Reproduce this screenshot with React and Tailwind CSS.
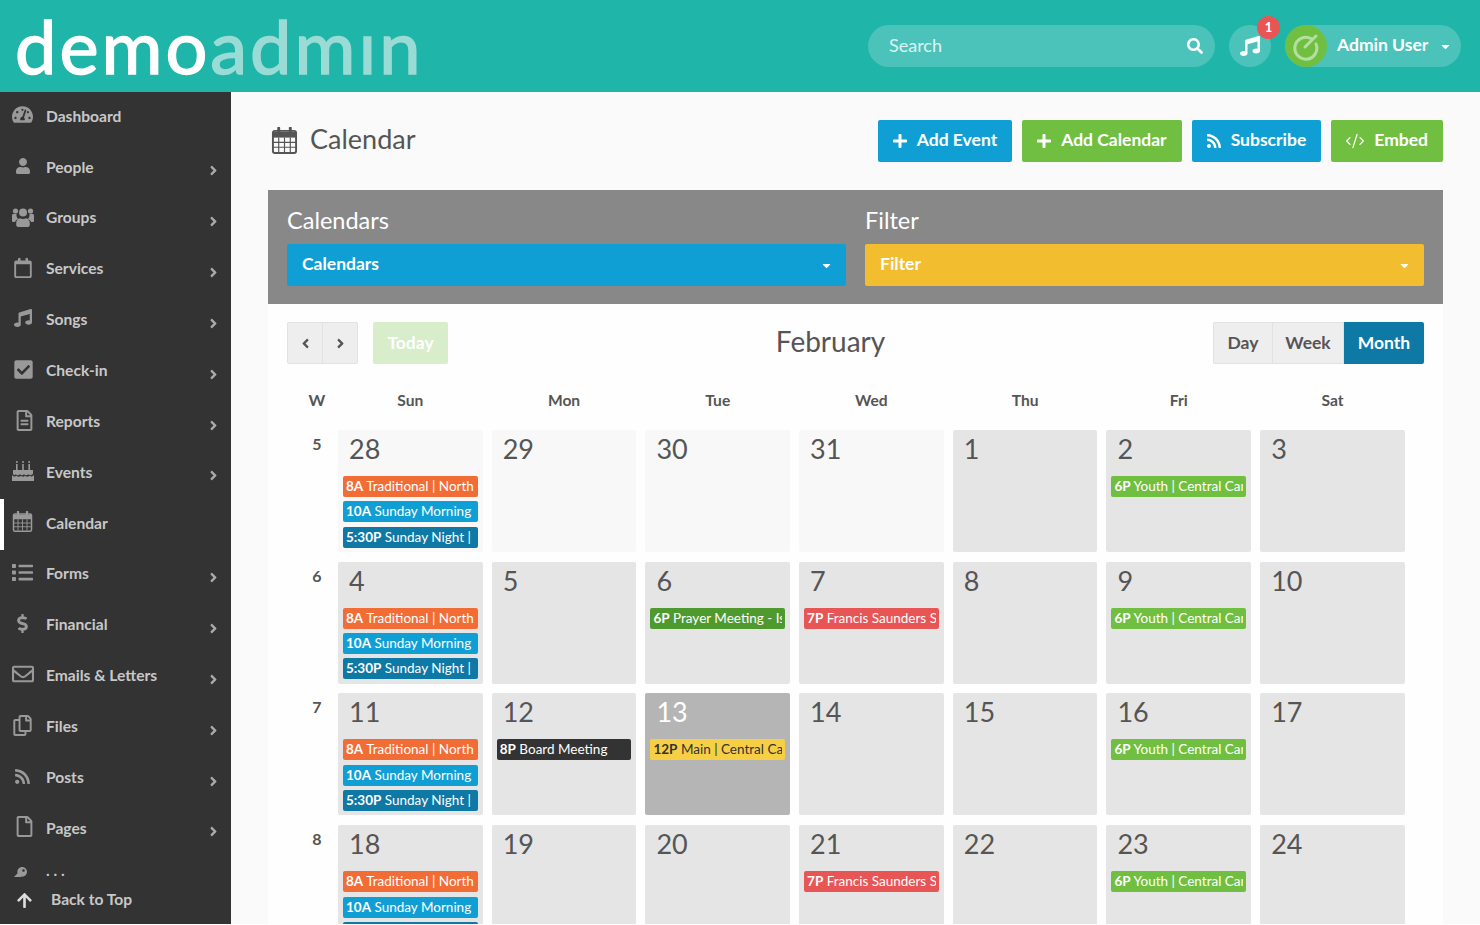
import { FaTachometerAlt, FaUser, FaRegCalendar, FaMusic, FaCheckSquare, FaRegFileAlt, FaList, FaDollarSign, FaRegEnvelope, FaRegCopy, FaRss, FaRegFile, FaAngleRight, FaAngleLeft, FaArrowUp, FaSearch, FaPlus, FaCaretDown, FaKey } from 'react-icons/fa'
import { CodeXml } from 'lucide-react'

function CalendarIcon({ size = 24, className }) {
  return (
    <svg width={size} height={size} viewBox="0 0 26 28" className={className} fill="none" stroke="currentColor">
      <rect x="1" y="4" width="24" height="23" rx="2" strokeWidth="2" />
      <path d="M1 5h24v6H1z" fill="currentColor" strokeWidth="0" />
      <path d="M1 16h24M1 21h24M7 11v15M13 11v15M19 11v15" strokeWidth="1.2" />
      <path d="M7 1v6M19 1v6" strokeWidth="3" strokeLinecap="round" />
    </svg>
  )
}

function CakeIcon({ size = 22 }) {
  return (
    <svg width={size} height={size} viewBox="0 0 22 22" fill="currentColor">
      <path d="M0 15c2 2 3 2 4.5.8 1.5 1.2 3 1.2 4.5 0 1.5 1.2 2.500 1.200 4 0 1.500 1.200 3 1.200 4.500 0 1.500 1.200 2.500 1.200 4.500-.8V21H0z" />
      <path d="M1 10h20v4c-2 1.500-3 1.500-4.500.2-1.500 1.300-3 1.300-4.500 0-1.500 1.300-2.500 1.300-4 0-1.500 1.300-3 1.300-4.500 0C3 15.500 2 15.500 1 14z" />
      <path d="M4 4h1.600v6H4zM10.200 4h1.600v6h-1.600zM16.400 4H18v6h-1.600z" />
      <circle cx="4.800" cy="2" r="1" />
      <circle cx="11" cy="2" r="1" />
      <circle cx="17.200" cy="2" r="1" />
    </svg>
  )
}

function GroupIcon() {
  return (
    <svg width="22" height="22" viewBox="0 0 22 22" fill="currentColor">
      <circle cx="3.500" cy="5" r="2.600" />
      <circle cx="18.500" cy="5" r="2.600" />
      <circle cx="11" cy="6.500" r="4" />
      <path d="M0 9.500c0-1 .6-1.500 1.500-1.500h3c-.3 2.500.6 4 1.800 5-1.700.6-2.800 1.700-3.300 3H1.500C.5 16 0 15.500 0 14.500zM22 9.500c0-1-.6-1.500-1.500-1.500h-3c.3 2.500-.6 4-1.800 5 1.700.6 2.800 1.700 3.300 3h1.500c1 0 1.500-.5 1.500-1.500z" />
      <path d="M8 12.200c1.800 1 4.200 1 6 0 2.500.4 3.800 2.300 3.800 5V19c0 1.300-1 2-2 2H6.200c-1 0-2-.7-2-2v-1.800c0-2.700 1.300-4.600 3.800-5z" />
    </svg>
  )
}

const navItems = [
  { label: 'Dashboard', icon: <FaTachometerAlt size={21} /> },
  { label: 'People', icon: <FaUser size={16} className="ml-[3px]" />, more: true },
  { label: 'Groups', icon: <GroupIcon />, more: true },
  { label: 'Services', icon: <FaRegCalendar size={20} className="ml-px" />, more: true },
  { label: 'Songs', icon: <FaMusic size={18} className="ml-[2px]" />, more: true },
  { label: 'Check-in', icon: <FaCheckSquare size={21} className="ml-px" />, more: true },
  { label: 'Reports', icon: <FaRegFileAlt size={21} className="ml-[2px]" />, more: true },
  { label: 'Events', icon: <CakeIcon />, more: true },
  { label: 'Calendar', icon: <CalendarIcon size={21} />, active: true },
  { label: 'Forms', icon: <FaList size={21} />, more: true },
  { label: 'Financial', icon: <FaDollarSign size={19} className="ml-[1px]" />, more: true },
  { label: 'Emails & Letters', icon: <FaRegEnvelope size={22} />, more: true },
  { label: 'Files', icon: <FaRegCopy size={21} />, more: true },
  { label: 'Posts', icon: <FaRss size={17} className="ml-[2px]" />, more: true },
  { label: 'Pages', icon: <FaRegFile size={21} className="ml-[2px]" />, more: true },
  { label: '. . .', icon: <FaKey size={14} className="ml-px -mt-[8px]" />, clipped: true },
]

const kinds = {
  orange: 'bg-[#f26c36] text-white',
  blue: 'bg-[#109fd5] text-white',
  navy: 'bg-[#0f79a5] text-white',
  green: 'bg-[#70bf41] text-white',
  forest: 'bg-[#4f9a2f] text-white',
  red: 'bg-[#e85555] text-white',
  black: 'bg-[#333333] text-white',
  yellow: 'bg-[#f7cf45] text-[#333333]',
}

const sunday = [
  { time: '8A', title: 'Traditional | North', kind: 'orange' },
  { time: '10A', title: 'Sunday Morning', kind: 'blue' },
  { time: '5:30P', title: 'Sunday Night | North Campus', kind: 'navy' },
]
const youth = [{ time: '6P', title: 'Youth | Central Campus', kind: 'green' }]
const francis = [{ time: '7P', title: 'Francis Saunders Shower', kind: 'red' }]

const weeks = [
  { n: 5, days: [
    { d: 28, past: true, events: sunday }, { d: 29, past: true }, { d: 30, past: true }, { d: 31, past: true },
    { d: 1 }, { d: 2, events: youth }, { d: 3 },
  ] },
  { n: 6, days: [
    { d: 4, events: sunday }, { d: 5 }, { d: 6, events: [{ time: '6P', title: 'Prayer Meeting - Issues', kind: 'forest' }] },
    { d: 7, events: francis }, { d: 8 }, { d: 9, events: youth }, { d: 10 },
  ] },
  { n: 7, days: [
    { d: 11, events: sunday }, { d: 12, events: [{ time: '8P', title: 'Board Meeting', kind: 'black' }] },
    { d: 13, today: true, events: [{ time: '12P', title: 'Main | Central Campus', kind: 'yellow' }] },
    { d: 14 }, { d: 15 }, { d: 16, events: youth }, { d: 17 },
  ] },
  { n: 8, days: [
    { d: 18, events: sunday }, { d: 19 }, { d: 20 }, { d: 21, events: francis }, { d: 22 }, { d: 23, events: youth }, { d: 24 },
  ] },
]

function Button({ color, icon, children }) {
  return (
    <button className={`h-[42px] pl-[14px] pr-[15px] rounded-[2px] flex items-center gap-[9px] text-white font-bold text-[17.5px] ${color}`}>
      {icon}
      <span className="-mt-[2px]">{children}</span>
    </button>
  )
}

function Select({ color, children }) {
  return (
    <div className={`h-[42px] rounded-[2px] pl-[15px] pr-[13px] flex items-center justify-between text-white font-bold text-[17.5px] ${color}`}>
      <span className="-mt-[2px]">{children}</span>
      <FaCaretDown size={13} />
    </div>
  )
}

function Chip({ time, title, kind }) {
  return (
    <div className={`h-[21px] mb-[4.4px] rounded-[2px] px-[3px] text-[13.5px] leading-[20px] ${kinds[kind]}`}>
      <div className="overflow-hidden whitespace-nowrap">
        <b>{time}</b> {title}
      </div>
    </div>
  )
}

function Day({ d, past, today, events = [] }) {
  const bg = today ? 'bg-[#b5b5b5] text-white' : past ? 'bg-[#f8f8f8] text-[#555555]' : 'bg-[#e5e5e5] text-[#555555]'
  return (
    <div className={`h-[122px] rounded-[2px] px-[5px] ${bg}`}>
      <div className="h-[46px] pl-[6px] pt-[1px] text-[27px] leading-[36px]">{d}</div>
      {events.map((e, i) => <Chip key={i} {...e} />)}
    </div>
  )
}

export default function App() {
  return (
    <div className="h-[924px] overflow-hidden flex flex-col bg-white text-[#555555] font-['Lato','Liberation_Sans',sans-serif]">
      {/* Top bar */}
      <header className="h-[92px] shrink-0 bg-[#20b5a9] flex items-center pl-[15px] pr-[19px]">
        <div className="text-[74px] leading-[88px] tracking-[3px] text-white select-none [-webkit-text-stroke:1.5px_currentColor]">
          demo<span className="text-[#9adcd5]">admın</span>
        </div>
        <div className="ml-auto w-[347px] h-[42px] rounded-full bg-white/20 flex items-center justify-between pl-[21px] pr-[12px] text-[18px] text-white/80">
          <span className="-mt-[2px]">Search</span>
          <FaSearch size={16} className="text-white" />
        </div>
        <div className="relative ml-[14px] w-[42px] h-[42px] rounded-full bg-white/20 flex items-center justify-center text-white">
          <FaMusic size={20} />
          <span className="absolute -top-[9px] -right-[9px] w-[23px] h-[23px] rounded-full bg-[#e85555] text-[13px] font-bold flex items-center justify-center">1</span>
        </div>
        <div className="ml-[14px] w-[176px] h-[42px] rounded-full bg-white/20 flex items-center text-white">
          <div className="w-[42px] h-[42px] rounded-full bg-[#70bf41] flex items-center justify-center">
            <svg width="30" height="30" viewBox="0 0 30 30" fill="none" stroke="#b5dfa0" strokeWidth="3" strokeLinecap="round">
              <path d="M20 7.500A11 11 0 1 0 25 13" />
              <path d="M14 16L25 5" />
            </svg>
          </div>
          <span className="ml-[10px] -mt-[2px] font-bold text-[17.5px]">Admin User</span>
          <FaCaretDown size={13} className="ml-auto mr-[9px]" />
        </div>
      </header>

      <div className="flex-1 flex min-h-0">
        {/* Sidebar */}
        <aside className="relative w-[231px] shrink-0 bg-[#333333] text-[#c8c8c8] overflow-hidden">
          {navItems.map(({ label, icon, more, active, clipped }) => (
            <div key={label} className="relative h-[50.86px] flex items-center text-[15.6px] font-bold">
              {active && <span className="absolute left-0 top-0 bottom-0 w-[4px] bg-white" />}
              <div className="w-[46px] pl-[12px] -mt-[5px] text-[#999999]">{icon}</div>
              <span className={clipped ? '-mt-[20px]' : '-mt-[2px]'}>{label}</span>
              {more && <FaAngleRight size={15} className="ml-auto mr-[10px] mt-[5px] text-[#aaaaaa]" />}
            </div>
          ))}
          <div className="absolute left-0 right-0 bottom-0 h-[47px] bg-[#333333] flex items-center pl-[16px] font-bold text-[15.6px]">
            <FaArrowUp size={17} className="text-[#dddddd] mr-[18px]" />
            <span className="-mt-[2px]">Back to Top</span>
          </div>
        </aside>

        {/* Main */}
        <main className="flex-1 min-w-0 bg-[#fafafa] px-[37px] pt-[28px] overflow-hidden">
          <div className="flex items-center h-[42px]">
            <CalendarIcon size={27} className="ml-[3px] mr-[12px] -mt-[1px] text-[#555555]" />
            <h1 className="text-[27px] -mt-[4px]">Calendar</h1>
            <div className="ml-auto flex gap-[10px]">
              <Button color="bg-[#109fd5]" icon={<FaPlus size={16} />}>Add Event</Button>
              <Button color="bg-[#70bf41]" icon={<FaPlus size={16} />}>Add Calendar</Button>
              <Button color="bg-[#109fd5]" icon={<FaRss size={16} />}>Subscribe</Button>
              <Button color="bg-[#70bf41]" icon={<CodeXml size={20} strokeWidth={1.5} />}>Embed</Button>
            </div>
          </div>

          <section className="mt-[28px] rounded-t-[2px] bg-white">
            <div className="h-[114px] bg-[#888888] px-[19px] pt-[14px] grid grid-cols-2 gap-x-[19px] text-white">
              <div>
                <div className="text-[23.5px] leading-[32px] mb-[8px]">Calendars</div>
                <Select color="bg-[#109fd5]">Calendars</Select>
              </div>
              <div>
                <div className="text-[23.5px] leading-[32px] mb-[8px]">Filter</div>
                <Select color="bg-[#f2bd2f]">Filter</Select>
              </div>
            </div>

            <div className="px-[19px] pt-[18px] bg-[#fefefe]">
              <div className="flex items-center justify-between h-[42px]">
                <div className="flex items-center">
                  <div className="flex h-[42px] rounded-[2px] border border-[#e2e2e2] bg-[#eeeeee] text-[#555555]">
                    <span className="w-[35px] flex items-center justify-center border-r border-[#e2e2e2]"><FaAngleLeft size={15} /></span>
                    <span className="w-[34px] flex items-center justify-center"><FaAngleRight size={15} /></span>
                  </div>
                  <button className="ml-[15px] w-[75px] h-[42px] rounded-[2px] bg-[#d8edc9] text-white font-bold text-[17.5px]">Today</button>
                </div>
                <h2 className="text-[28px] -mt-[4px]">February</h2>
                <div className="flex h-[42px] rounded-[2px] overflow-hidden text-[17.5px] font-bold">
                  <span className="w-[60px] flex items-center justify-center bg-[#eeeeee] border border-[#e2e2e2]">Day</span>
                  <span className="w-[71px] flex items-center justify-center bg-[#eeeeee] border-y border-r border-[#e2e2e2]">Week</span>
                  <span className="w-[80px] flex items-center justify-center bg-[#0f79a5] text-white">Month</span>
                </div>
              </div>

              <div className="mt-[25px] grid grid-cols-[42px_repeat(7,144.7px)] gap-x-[9px] gap-y-[9.8px]">
                <div className="h-[31px] pl-[18px] text-center font-bold text-[16px] -mt-[1px]">W</div>
                {['Sun', 'Mon', 'Tue', 'Wed', 'Thu', 'Fri', 'Sat'].map(name => (
                  <div key={name} className="h-[31px] text-center font-bold text-[15.6px]">{name}</div>
                ))}
                {weeks.map(week => (
                  <div key={week.n} className="contents">
                    <div className="pl-[18px] pt-[2px] text-center font-bold text-[16px]">{week.n}</div>
                    {week.days.map(day => <Day key={day.d} {...day} />)}
                  </div>
                ))}
              </div>
            </div>
          </section>
        </main>
      </div>
    </div>
  )
}
